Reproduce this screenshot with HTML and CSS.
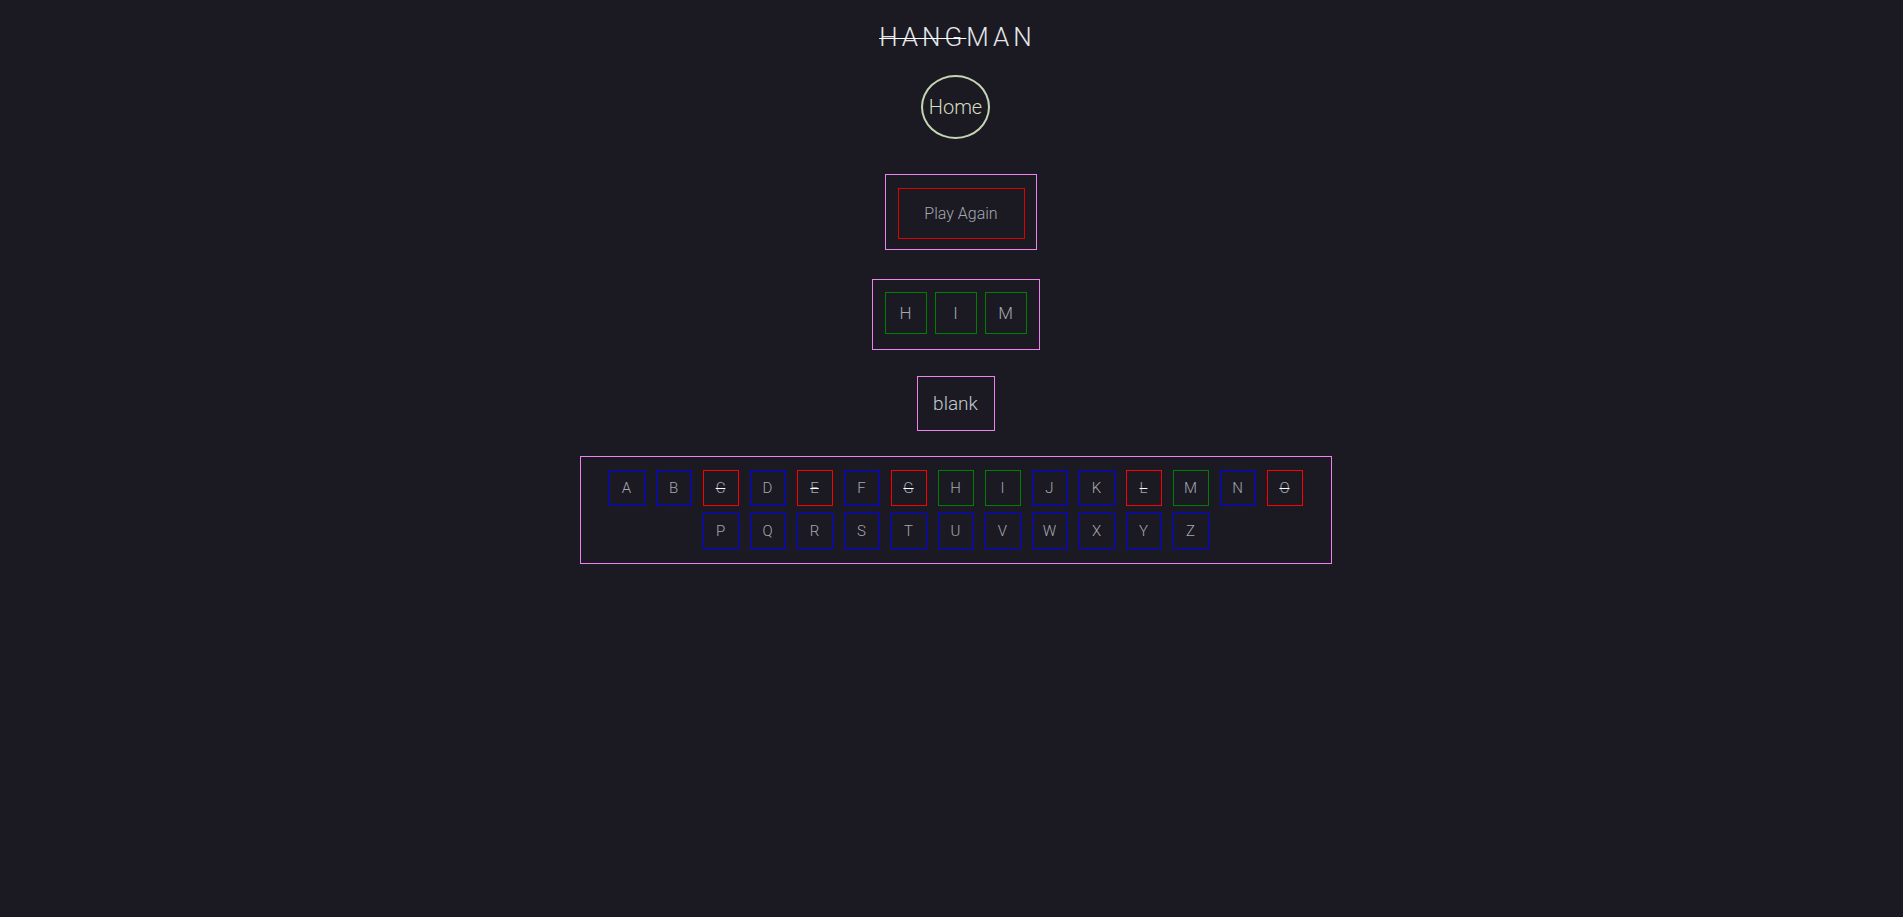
FILE: index.html
```html
<!DOCTYPE html>
<html lang="en">
<head>
<meta charset="utf-8">
<title>Hangman</title>
<link rel="stylesheet" href="styles.css">
</head>
<body>
<main class="app">
  <h1 class="title"><span class="struck">HANG</span>MAN</h1>
  <a class="home" href="#">Home</a>
  <div class="panel panel-play">
    <button class="play-btn">Play Again</button>
  </div>
  <div class="panel panel-word">
    <span class="slot">H</span>
    <span class="slot">I</span>
    <span class="slot">M</span>
  </div>
  <div class="panel panel-hint">blank</div>
  <div class="panel keyboard">
    <span class="key miss">A</span>
    <span class="key miss">B</span>
    <span class="key wrong">C</span>
    <span class="key miss">D</span>
    <span class="key wrong">E</span>
    <span class="key miss">F</span>
    <span class="key wrong">G</span>
    <span class="key hit">H</span>
    <span class="key hit">I</span>
    <span class="key miss">J</span>
    <span class="key miss">K</span>
    <span class="key wrong">L</span>
    <span class="key hit">M</span>
    <span class="key miss">N</span>
    <span class="key wrong">O</span>
    <span class="key miss">P</span>
    <span class="key miss">Q</span>
    <span class="key miss">R</span>
    <span class="key miss">S</span>
    <span class="key miss">T</span>
    <span class="key miss">U</span>
    <span class="key miss">V</span>
    <span class="key miss">W</span>
    <span class="key miss">X</span>
    <span class="key miss">Y</span>
    <span class="key miss">Z</span>
  </div>
</main>
</body>
</html>
```
FILE: styles.css
```css
html, body {
  margin: 0;
  padding: 0;
  background: #1b1a23;
  min-height: 100%;
}
body {
  font-family: Roboto, "Open Sans", sans-serif;
  color: #a3a8b0;
}
.app {
  display: flex;
  flex-direction: column;
  align-items: center;
  padding: 22px 0 0 8px;
}
.title {
  margin: 0;
  font-size: 26px;
  font-weight: 300;
  line-height: 30px;
  letter-spacing: 4px;
  color: #e4e6ea;
  padding-left: 4px;
}
.struck {
  text-decoration: line-through;
  text-decoration-color: #ffffff;
  text-decoration-thickness: 1px;
}
.home {
  margin-top: 23px;
  width: 69px;
  height: 64px;
  box-sizing: border-box;
  border: 2px solid #c3d6b3;
  border-radius: 50%;
  display: flex;
  align-items: center;
  justify-content: center;
  font-size: 20px;
  font-weight: 300;
  color: #d6dcc0;
  text-decoration: none;
}
.panel {
  border: 1px solid #ee82ee;
  box-sizing: border-box;
}
.panel-play {
  margin-top: 35px;
  margin-left: 10px;
  padding: 13px 11px 10px 12px;
}
.play-btn {
  display: block;
  width: 127px;
  height: 51px;
  background: transparent;
  border: 1px solid #e00000;
  color: #a3a8b0;
  font-family: Roboto, "Open Sans", sans-serif;
  font-size: 16px;
  font-weight: 300;
  padding: 0;
}
.panel-word {
  margin-top: 29px;
  display: flex;
  gap: 8px;
  padding: 12px 12px 15px 12px;
}
.slot {
  width: 42px;
  height: 42px;
  box-sizing: border-box;
  border: 1px solid #008000;
  display: flex;
  align-items: center;
  justify-content: center;
  font-size: 17px;
  font-weight: 300;
}
.panel-hint {
  margin-top: 26px;
  width: 78px;
  height: 55px;
  display: flex;
  align-items: center;
  justify-content: center;
  font-size: 19px;
  font-weight: 300;
  color: #c4cad2;
}
.keyboard {
  margin-top: 25px;
  width: 752px;
  display: flex;
  flex-wrap: wrap;
  justify-content: center;
  gap: 7px 11px;
  padding: 13px 28px 14px;
}
.key {
  width: 36px;
  height: 36px;
  box-sizing: border-box;
  border: 1px solid #0000ff;
  display: flex;
  align-items: center;
  justify-content: center;
  font-size: 15px;
  font-weight: 300;
}
.key.hit {
  border-color: #008000;
}
.key.wrong {
  border-color: #ff0000;
  text-decoration: line-through;
  text-decoration-color: #ffffff;
}
```
